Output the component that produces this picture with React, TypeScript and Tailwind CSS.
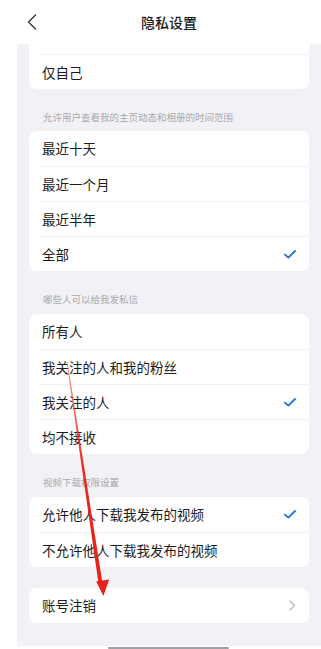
import React from 'react';

interface Row {
  label: string;
  checked?: boolean;
  arrow?: boolean;
}

const CheckIcon = () => (
  <svg width="12" height="9" viewBox="0 0 12 9" fill="none">
    <path d="M1 4.6 L4.3 7.6 L11 1" stroke="#2a74d8" strokeWidth="1.9" strokeLinecap="round" strokeLinejoin="round" />
  </svg>
);

const ChevronRight = () => (
  <svg width="7" height="11" viewBox="0 0 7 11" fill="none">
    <path d="M1 1 L5.5 5.5 L1 10" stroke="#b4b4b8" strokeWidth="1.2" strokeLinecap="round" strokeLinejoin="round" />
  </svg>
);

const Card: React.FC<{ rows: Row[] }> = ({ rows }) => (
  <div className="bg-white rounded-[8px] flex flex-col">
    {rows.map((row, i) => (
      <div
        key={row.label}
        className={`h-[35px] ml-[9px] pl-[4px] pr-[13px] flex items-center justify-between ${i > 0 ? 'border-t border-[#f1f1f3]' : ''}`}
      >
        <span className="text-[13.5px] text-[#1c1c1e] leading-none pt-[1px]">{row.label}</span>
        {row.checked && <CheckIcon />}
        {row.arrow && <ChevronRight />}
      </div>
    ))}
  </div>
);

const SectionLabel: React.FC<{ text: string; h: string; pb: string }> = ({ text, h, pb }) => (
  <div className={`${h} ${pb} flex items-end px-[14px]`}>
    <span className="text-[9.5px] leading-[12px] text-[#a8a8ae]">{text}</span>
  </div>
);

export default function App() {
  return (
    <div
      className="relative w-[321px] h-[649px] bg-white flex overflow-hidden"
      style={{ fontFamily: '"Noto Sans CJK SC", "Noto Sans", sans-serif' }}
    >
      <div className="w-[17px] shrink-0 bg-white" />
      <div className="w-[304px] flex flex-col">
        {/* header */}
        <div className="h-[44px] shrink-0 flex items-center bg-white">
          <div className="w-[40px] pl-[10px] flex items-center">
            <svg width="10" height="16" viewBox="0 0 10 16" fill="none">
              <path d="M8.5 1 L1.5 8 L8.5 15" stroke="#333" strokeWidth="1.3" strokeLinecap="round" strokeLinejoin="round" />
            </svg>
          </div>
          <div className="flex-1 text-center text-[14px] font-medium text-[#1c1c1e]">隐私设置</div>
          <div className="w-[40px]" />
        </div>

        {/* content */}
        <div className="h-[602px] shrink-0 bg-[#f2f2f6] px-[12px] flex flex-col">
          <div className="bg-white rounded-b-[8px] flex flex-col">
            <div className="h-[10px]" />
            <div className="h-[35px] ml-[9px] pl-[4px] flex items-center border-t border-[#f1f1f3]">
              <span className="text-[13.5px] text-[#1c1c1e] leading-none pt-[1px]">仅自己</span>
            </div>
          </div>

          <SectionLabel text="允许用户查看我的主页动态和相册的时间范围" h="h-[42px]" pb="pb-[8px]" />
          <Card rows={[{ label: '最近十天' }, { label: '最近一个月' }, { label: '最近半年' }, { label: '全部', checked: true }]} />

          <SectionLabel text="哪些人可以给我发私信" h="h-[43px]" pb="pb-[9px]" />
          <Card
            rows={[
              { label: '所有人' },
              { label: '我关注的人和我的粉丝' },
              { label: '我关注的人', checked: true },
              { label: '均不接收' },
            ]}
          />

          <SectionLabel text="视频下载权限设置" h="h-[43px]" pb="pb-[9px]" />
          <Card rows={[{ label: '允许他人下载我发布的视频', checked: true }, { label: '不允许他人下载我发布的视频' }]} />

          <div className="h-[21px]" />
          <Card rows={[{ label: '账号注销', arrow: true }]} />
        </div>

        {/* home indicator */}
        <div className="flex-1 bg-white flex items-end pl-[91px]">
          <div className="w-[121px] h-[2px] rounded-full bg-[#a0a0a4]" />
        </div>
      </div>

      {/* red annotation arrow */}
      <svg className="absolute inset-0 pointer-events-none" width="321" height="649" viewBox="0 0 321 649">
        <defs>
          <linearGradient id="arrowGrad" x1="0" y1="362" x2="0" y2="596" gradientUnits="userSpaceOnUse">
            <stop offset="0" stopColor="#e8463e" stopOpacity="0.55" />
            <stop offset="0.45" stopColor="#e62117" stopOpacity="0.95" />
            <stop offset="1" stopColor="#e62117" />
          </linearGradient>
        </defs>
        <polygon points="66.6,362 67.6,362 102.6,584 98.6,584" fill="url(#arrowGrad)" />
        <polygon points="96.2,581.5 109.2,579.5 103.4,596" fill="#e62117" />
      </svg>
    </div>
  );
}
